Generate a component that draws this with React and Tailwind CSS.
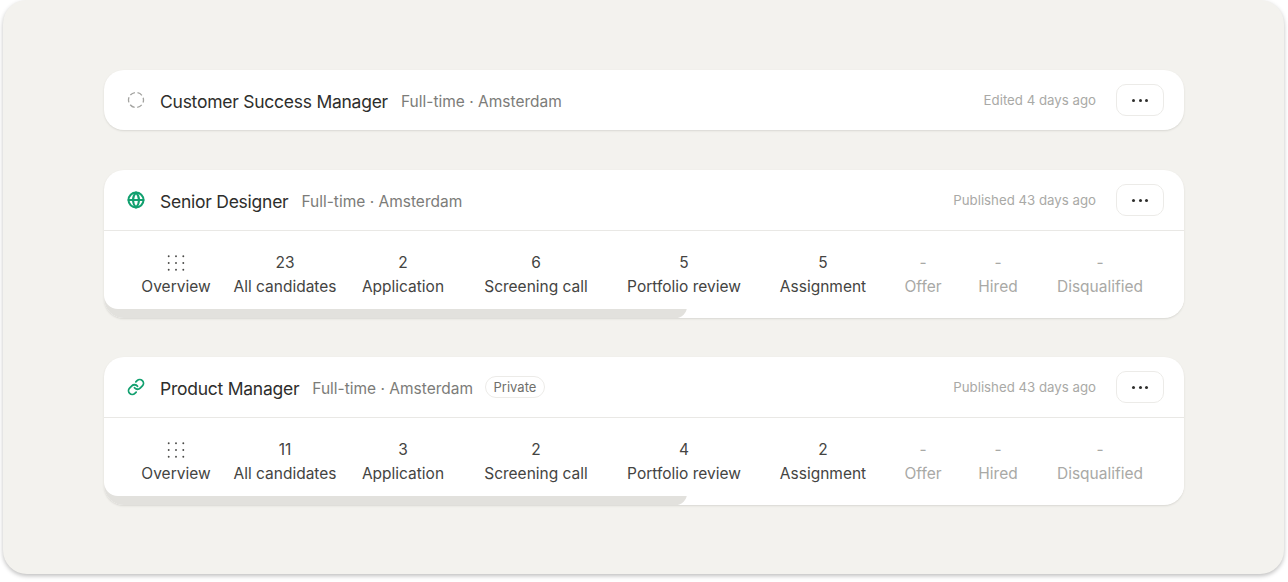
import { Globe, Link } from "lucide-react";

const TABS = [
  { label: "Overview", width: "w-[90px]" },
  { label: "All candidates", width: "w-[128px]" },
  { label: "Application", width: "w-[108px]" },
  { label: "Screening call", width: "w-[158px]" },
  { label: "Portfolio review", width: "w-[138px]" },
  { label: "Assignment", width: "w-[140px]" },
  { label: "Offer", width: "w-[60px]", muted: true },
  { label: "Hired", width: "w-[90px]", muted: true },
  { label: "Disqualified", width: "w-[114px]", muted: true },
];

function DashedCircle() {
  return (
    <svg width="18" height="18" viewBox="0 0 18 18" fill="none">
      <circle
        cx="9"
        cy="9"
        r="7.5"
        stroke="#a3a3a0"
        strokeWidth="1.3"
        strokeDasharray="5.2 2.65"
        strokeDashoffset="2.6"
      />
    </svg>
  );
}

function GridDots() {
  const columns = [1.7, 9, 16.3];
  const rows = [2.3, 9, 15.7];
  return (
    <svg width="18" height="18" viewBox="0 0 18 18" fill="#4a4a48">
      {rows.map((y) =>
        columns.map((x) => <circle key={`${x}-${y}`} cx={x} cy={y} r="0.95" />)
      )}
    </svg>
  );
}

function MoreButton() {
  return (
    <button className="flex h-8 w-12 items-center justify-center gap-[3.5px] rounded-[10px] border border-[#ecebe8] bg-white">
      <span className="h-[3px] w-[3px] rounded-full bg-[#2e2e2c]" />
      <span className="h-[3px] w-[3px] rounded-full bg-[#2e2e2c]" />
      <span className="h-[3px] w-[3px] rounded-full bg-[#2e2e2c]" />
    </button>
  );
}

function CardHeader({ icon, title, badge, time }) {
  return (
    <div className="flex h-[60px] items-center pl-[23px] pr-5">
      <div className="flex w-[18px] justify-center">{icon}</div>
      <h2 className="ml-[15px] pt-[3px] text-[17.5px] leading-6 tracking-[-0.25px] text-[#2e2e2c]">{title}</h2>
      <span className="ml-[13px] pt-[3px] text-[15.5px] leading-6 text-[#7c7c79]">Full-time · Amsterdam</span>
      {badge && (
        <span className="ml-3 flex h-[22px] items-center rounded-full border border-[#ecebe8] px-[7.5px] pt-px text-[13px] text-[#6f6f6c]">
          {badge}
        </span>
      )}
      <span className="ml-auto pt-[2px] text-[13.25px] text-[#a9a9a6]">{time}</span>
      <div className="ml-5">
        <MoreButton />
      </div>
    </div>
  );
}

function JobCard({ icon, title, badge, time, counts }) {
  return (
    <div className="overflow-hidden rounded-[20px] bg-white shadow-[0_1px_2px_#d8d7d2]">
      <CardHeader icon={icon} title={title} badge={badge} time={time} />
      <div className="relative z-10 flex rounded-bl-[14px] border-t border-[#e9e8e5] bg-white pb-[10px] pl-[27px] pt-[20px]">
        {TABS.map((tab, i) => (
          <div
            key={tab.label}
            className={`flex shrink-0 flex-col items-center text-[15.5px] leading-6 ${tab.width} ${
              tab.muted ? "text-[#a9a9a6]" : "text-[#444442]"
            }`}
          >
            <div className="flex h-6 items-center">{i === 0 ? <GridDots /> : counts[i - 1]}</div>
            <div className="whitespace-nowrap">{tab.label}</div>
          </div>
        ))}
      </div>
      <div className="-mt-[14px] h-[23px] w-[583px] rounded-r-full bg-[#e2e1dd]" />
    </div>
  );
}

export default function App() {
  return (
    <div className="h-[582px] bg-white pb-2 pl-[3px] pr-1 font-['Inter',sans-serif]">
      <div className="flex h-full flex-col rounded-[24px] bg-[#f3f2ee] pl-[101px] pr-[100px] pt-[70px] shadow-[0_2px_4px_rgba(0,0,0,0.25)]">
        <div className="rounded-[20px] bg-white shadow-[0_1px_2px_#d8d7d2]">
          <CardHeader
            icon={<DashedCircle />}
            title="Customer Success Manager"
            time="Edited 4 days ago"
          />
        </div>
        <div className="mt-10">
          <JobCard
            icon={<Globe size={18} strokeWidth={2.7} className="text-[#12a06f]" />}
            title="Senior Designer"
            time="Published 43 days ago"
            counts={["23", "2", "6", "5", "5", "-", "-", "-"]}
          />
        </div>
        <div className="mt-[39px]">
          <JobCard
            icon={<Link size={18} strokeWidth={2.4} className="text-[#12a06f]" />}
            title="Product Manager"
            badge="Private"
            time="Published 43 days ago"
            counts={["11", "3", "2", "4", "2", "-", "-", "-"]}
          />
        </div>
      </div>
    </div>
  );
}
